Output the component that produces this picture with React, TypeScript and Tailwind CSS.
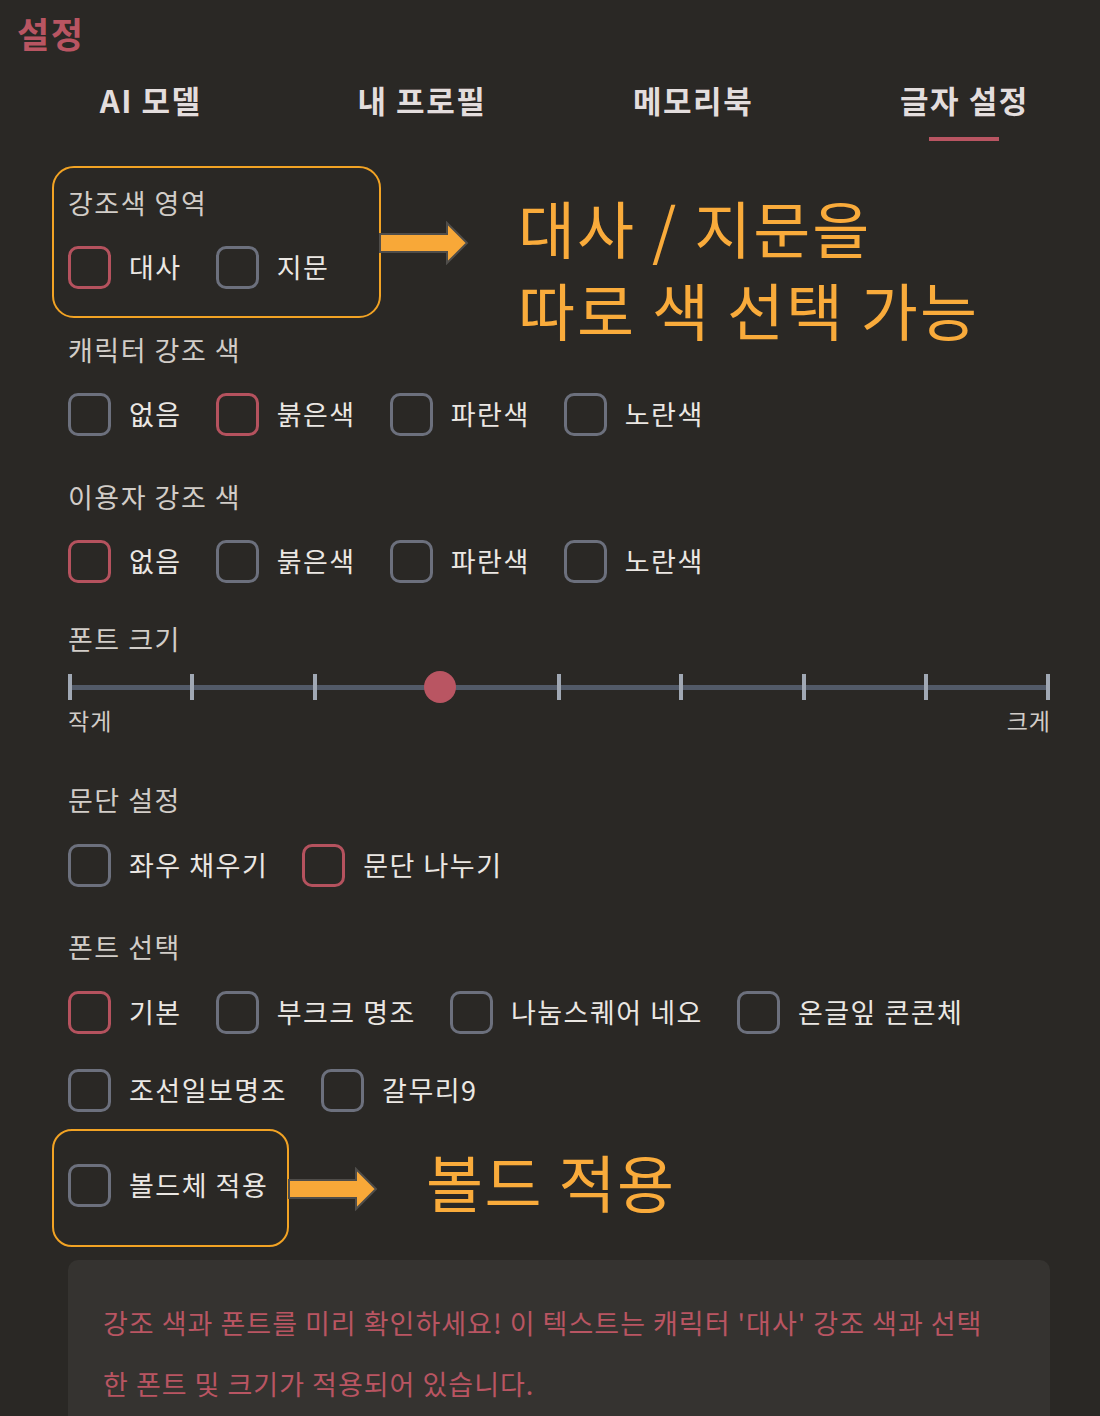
/**
 * 글자 설정 (Text settings) screen
 *
 * Settings tabs, highlight colour pickers, font size slider,
 * paragraph/font options and a preview box, with orange annotations.
 */

const FONT = { fontFamily: '"Noto Sans CJK KR", "Noto Sans", sans-serif' };

const tabs = ['AI 모델', '내 프로필', '메모리북', '글자 설정'];

export default function App() {
  return (
    <div
      className="relative w-[1100px] h-[1416px] overflow-hidden bg-[#2a2825] text-[#ebe7e3]"
      style={FONT}
    >
      {/* Title */}
      <div className="h-[64px] flex items-center pl-[17px]">
        <h1 className="text-[35px] tracking-[1.5px] font-bold text-[#b95562] leading-none">설정</h1>
      </div>

      {/* Tabs */}
      <div className="grid grid-cols-4 pl-[15px] h-[77px]">
        {tabs.map((t, i) => (
          <div key={t} className="flex flex-col items-center">
            <div className="h-[73px] flex items-center text-[31px] tracking-[1.5px] font-bold text-[#e3dddd]">{t}</div>
            {i === 3 && <div className="w-[70px] h-[4px] bg-[#b95562]" />}
          </div>
        ))}
      </div>

      {/* Content */}
      <div className="pl-[68px] pr-[50px] flex flex-col">
        <SectionLabel className="mt-[42px]">강조색 영역</SectionLabel>
        <Row className="mt-[20px]" items={[{ label: '대사', on: true }, { label: '지문' }]} />

        <SectionLabel className="mt-[39px]">캐릭터 강조 색</SectionLabel>
        <Row
          className="mt-[20px]"
          items={[{ label: '없음' }, { label: '붉은색', on: true }, { label: '파란색' }, { label: '노란색' }]}
        />

        <SectionLabel className="mt-[39px]">이용자 강조 색</SectionLabel>
        <Row
          className="mt-[20px]"
          items={[{ label: '없음', on: true }, { label: '붉은색' }, { label: '파란색' }, { label: '노란색' }]}
        />

        <SectionLabel className="mt-[34px]">폰트 크기</SectionLabel>
        <Slider />
        <div className="h-[30px] flex items-center justify-between text-[23px] tracking-[1px] text-[#d2cdc8]">
          <span>작게</span>
          <span className="-mr-[1px]">크게</span>
        </div>

        <SectionLabel className="mt-[45px]">문단 설정</SectionLabel>
        <Row className="mt-[21px]" items={[{ label: '좌우 채우기' }, { label: '문단 나누기', on: true }]} />

        <SectionLabel className="mt-[38px]">폰트 선택</SectionLabel>
        <Row
          className="mt-[21px]"
          items={[{ label: '기본', on: true }, { label: '부크크 명조' }, { label: '나눔스퀘어 네오' }, { label: '온글잎 콘콘체' }]}
        />
        <Row className="mt-[30px]" items={[{ label: '조선일보명조' }, { label: '갈무리9' }]} />

        <Row className="mt-[47px]" items={[{ label: '볼드체 적용' }]} />

        {/* Preview */}
        <div className="mt-[51px] h-[200px] rounded-[10px] bg-[#353330] pl-[35px] pr-[56px] pt-[32px]">
          <p className="text-[27px] tracking-[1px] leading-[61px] text-[#b95562]">
            강조 색과 폰트를 미리 확인하세요! 이 텍스트는 캐릭터 '대사' 강조 색과 선택 한 폰트 및 크기가 적용되어 있습니다.
          </p>
        </div>
      </div>

      {/* Annotations */}
      <div className="absolute left-[52px] top-[166px] w-[329px] h-[152px] rounded-[22px] border-[2.5px] border-[#f2a324]" />
      <Arrow className="absolute left-[379px] top-[221px]" />
      <div className="absolute left-[518px] top-[186px] text-[62px] tracking-[2px] leading-[82px] text-[#f9ab3b]">
        <div>대사 / 지문을</div>
        <div>따로 색 선택 가능</div>
      </div>

      <div className="absolute left-[52px] top-[1129px] w-[237px] h-[118px] rounded-[20px] border-[2.5px] border-[#f2a324]" />
      <Arrow className="absolute left-[288px] top-[1167px]" />
      <div className="absolute left-[426px] top-[1140px] text-[62px] tracking-[1.5px] leading-[82px] text-[#f9ab3b]">볼드 적용</div>
    </div>
  );
}

function SectionLabel({ children, className = '' }: { children: string; className?: string }) {
  return (
    <div className={`h-[40px] flex items-center text-[27px] tracking-[1.5px] text-[#d2cdc8] ${className}`}>{children}</div>
  );
}

function Row({ items, className = '' }: { items: { label: string; on?: boolean }[]; className?: string }) {
  return (
    <div className={`h-[48px] flex items-center gap-[34px] ${className}`}>
      {items.map((it) => (
        <div key={it.label} className="flex items-center gap-[18px]">
          <span
            className={`w-[43px] h-[43px] rounded-[10px] border-[3.5px] ${it.on ? 'border-[#b5525e]' : 'border-[#6c707d]'}`}
          />
          <span className="text-[27px] tracking-[1.5px] text-[#ebe7e3]">{it.label}</span>
        </div>
      ))}
    </div>
  );
}

function Slider() {
  const ticks = Array.from({ length: 9 });
  return (
    <div className="relative mt-[10px] h-[36px] flex items-center justify-between">
      <div className="absolute left-0 right-0 top-[16px] h-[5px] bg-[#525a68]" />
      {ticks.map((_, i) => (
        <span key={i} className="relative w-[4px] h-[26px] bg-[#a0a8b4]" />
      ))}
      <span className="absolute left-[356px] top-[2px] w-[32px] h-[32px] rounded-full bg-[#b95562]" />
    </div>
  );
}

function Arrow({ className = '' }: { className?: string }) {
  return (
    <svg className={className} width="90" height="44" viewBox="0 0 90 44">
      <path
        d="M1 13 H68 V2 L88 22 L68 42 V31 H1 Z"
        fill="#f8a838"
        stroke="#4f4d4a"
        strokeWidth="2"
        strokeLinejoin="miter"
      />
    </svg>
  );
}
